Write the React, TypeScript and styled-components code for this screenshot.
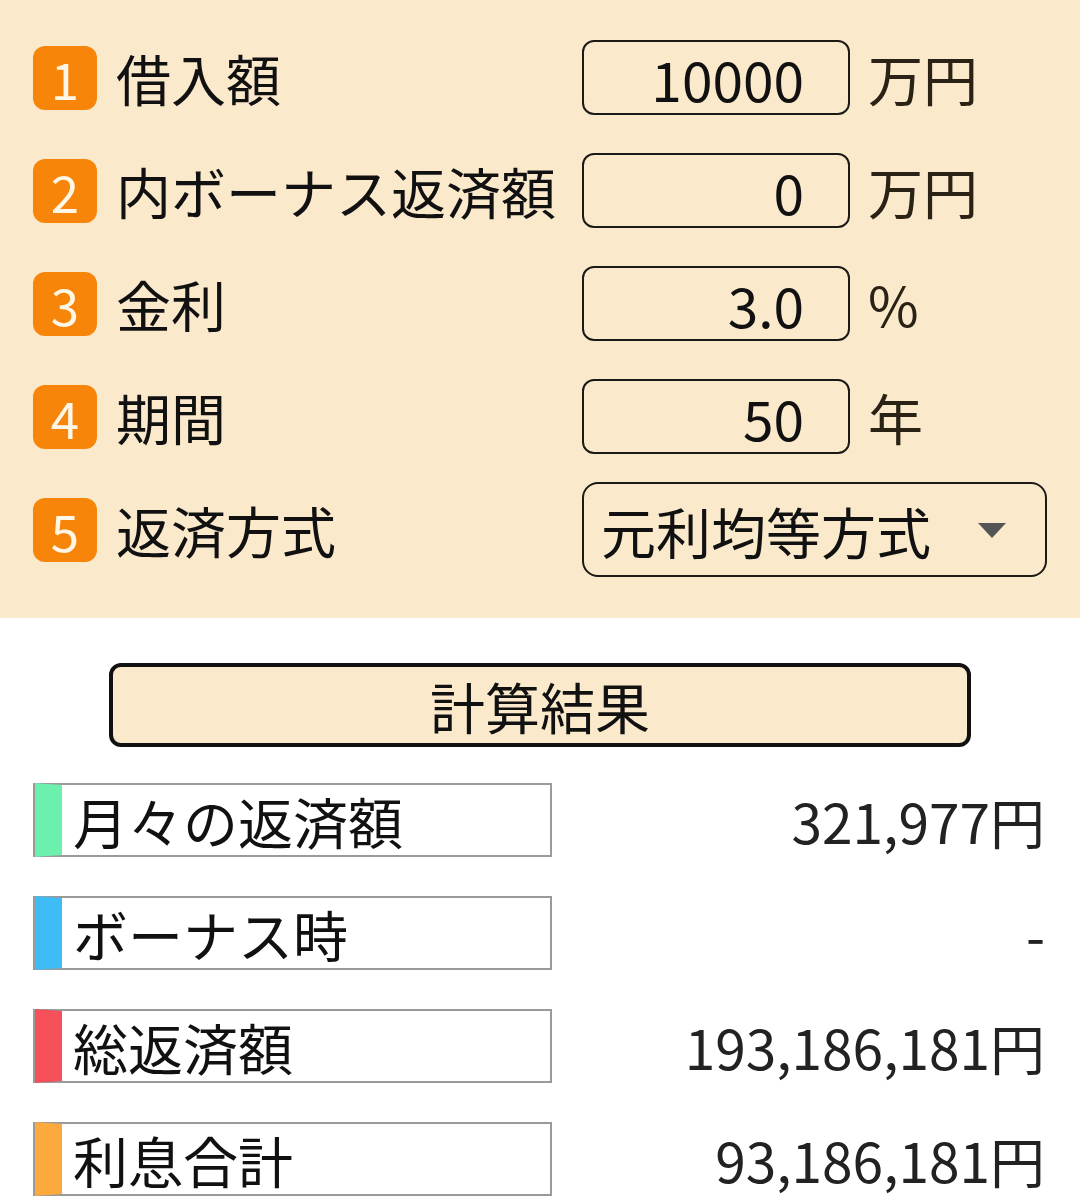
import React from "react";
import styled, { createGlobalStyle } from "styled-components";

const Global = createGlobalStyle`
  html, body { margin: 0; padding: 0; background: #ffffff; }
  body { font-family: "Noto Sans CJK JP", "Noto Sans", sans-serif; }
  * { box-sizing: border-box; }
`;

const Panel = styled.section`
  background: #fbe9cc;
  padding: 21px 0 32px 33px;
  display: flex;
  flex-direction: column;
`;

const Row = styled.div`
  height: 113px;
  display: flex;
  align-items: center;
`;

const LabelArea = styled.div`
  width: 549px;
  display: flex;
  align-items: center;
  gap: 19px;
`;

const Badge = styled.span`
  width: 64px;
  height: 64px;
  border-radius: 12px;
  background: #f6850a;
  color: #fff6e6;
  font-size: 51px;
  line-height: 64px;
  text-align: center;
  flex: none;
`;

const Label = styled.span`
  font-size: 55px;
  line-height: 1;
  color: #111;
  white-space: nowrap;
`;

const Field = styled.div`
  display: flex;
  align-items: center;
  gap: 18px;
`;

const NumInput = styled.input`
  width: 268px;
  height: 75px;
  border: 2.5px solid #1c1a16;
  border-radius: 12px;
  background: transparent;
  font-family: inherit;
  font-size: 55px;
  color: #111;
  text-align: right;
  padding: 0 44px 0 0;
  outline: none;
`;

const Unit = styled.span`
  font-size: 55px;
  line-height: 1;
  color: #2a2315;
`;

const SelectWrap = styled.div`
  position: relative;
  width: 465px;
  height: 95px;
`;

const Select = styled.select`
  appearance: none;
  -webkit-appearance: none;
  width: 100%;
  height: 100%;
  border: 2.5px solid #1c1a16;
  border-radius: 16px;
  background: transparent;
  font-family: inherit;
  font-size: 55px;
  color: #111;
  padding: 0 0 0 17px;
  outline: none;
`;

const Arrow = styled.span`
  position: absolute;
  right: 41px;
  top: 41px;
  width: 0;
  height: 0;
  border-left: 14px solid transparent;
  border-right: 14px solid transparent;
  border-top: 15px solid #555;
  pointer-events: none;
`;

const Results = styled.section`
  display: flex;
  flex-direction: column;
  align-items: center;
  padding-top: 45px;
`;

const CalcButton = styled.button`
  width: 862px;
  height: 84px;
  border: 4px solid #111;
  border-radius: 12px;
  background: #fbe9cc;
  font-family: inherit;
  font-size: 55px;
  color: #111;
  padding: 0;
  line-height: 1;
  margin-bottom: 36px;
`;

const ResultList = styled.div`
  align-self: stretch;
  display: flex;
  flex-direction: column;
  gap: 39px;
  padding: 0 35px 0 33px;
`;

const ResultRow = styled.div`
  display: flex;
  align-items: center;
  justify-content: space-between;
`;

const ResultLabel = styled.div<{ $color: string }>`
  width: 519px;
  height: 74px;
  border: 2px solid #9a9a9a;
  border-left: 29px solid ${(p) => p.$color};
  background: #fff;
  display: flex;
  align-items: center;
  padding-left: 11px;
  font-size: 55px;
  color: #111;
  line-height: 1;
  position: relative;
  &::before {
    content: "";
    position: absolute;
    left: -29px;
    top: -2px;
    bottom: -2px;
    width: 2px;
    background: #9a9a9a;
  }
`;

const Value = styled.div`
  font-size: 55px;
  line-height: 1;
  color: #222;
  text-align: right;
`;

const inputs = [
  { n: 1, label: "借入額", value: "10000", unit: "万円" },
  { n: 2, label: "内ボーナス返済額", value: "0", unit: "万円" },
  { n: 3, label: "金利", value: "3.0", unit: "%" },
  { n: 4, label: "期間", value: "50", unit: "年" },
];

const results = [
  { label: "月々の返済額", color: "#6cf0ad", value: "321,977円" },
  { label: "ボーナス時", color: "#3fbcf6", value: "-" },
  { label: "総返済額", color: "#f6505a", value: "193,186,181円" },
  { label: "利息合計", color: "#fca93e", value: "93,186,181円" },
];

export default function App() {
  return (
    <>
      <Global />
      <Panel>
        {inputs.map((it) => (
          <Row key={it.n}>
            <LabelArea>
              <Badge>{it.n}</Badge>
              <Label>{it.label}</Label>
            </LabelArea>
            <Field>
              <NumInput defaultValue={it.value} />
              <Unit>{it.unit}</Unit>
            </Field>
          </Row>
        ))}
        <Row>
          <LabelArea>
            <Badge>5</Badge>
            <Label>返済方式</Label>
          </LabelArea>
          <SelectWrap>
            <Select defaultValue="a">
              <option value="a">元利均等方式</option>
              <option value="b">元金均等方式</option>
            </Select>
            <Arrow />
          </SelectWrap>
        </Row>
      </Panel>
      <Results>
        <CalcButton>計算結果</CalcButton>
        <ResultList>
          {results.map((r) => (
            <ResultRow key={r.label}>
              <ResultLabel $color={r.color}>{r.label}</ResultLabel>
              <Value>{r.value}</Value>
            </ResultRow>
          ))}
        </ResultList>
      </Results>
    </>
  );
}
